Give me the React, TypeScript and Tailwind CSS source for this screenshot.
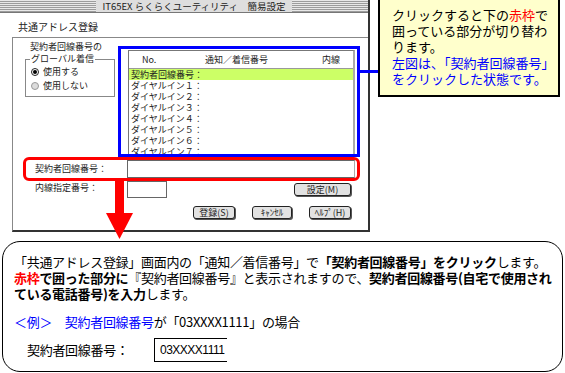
import React from 'react';

const listRows = [
  'ダイヤルイン１：',
  'ダイヤルイン２：',
  'ダイヤルイン３：',
  'ダイヤルイン４：',
  'ダイヤルイン５：',
  'ダイヤルイン６：',
  'ダイヤルイン７：',
];

const MacButton: React.FC<{ label: string; width: string }> = ({ label, width }) => (
  <div
    className={`${width} h-[13px] rounded-[3px] border border-[#222] bg-[#e2e2e2] shadow-[1px_1px_0_#555] flex items-center justify-center text-[9px] leading-[11px] whitespace-nowrap`}
  >
    {label}
  </div>
);

const Radio: React.FC<{ checked?: boolean; label: string }> = ({ checked, label }) => (
  <div className="flex items-center h-[14px] pl-[5px] gap-[4px]">
    <span
      className={`w-[8px] h-[8px] rounded-full border flex items-center justify-center ${
        checked ? 'border-[#222] bg-white' : 'border-[#999] bg-[#dcdcdc]'
      }`}
    >
      {checked && <span className="w-[4px] h-[4px] rounded-full bg-black" />}
    </span>
    <span>{label}</span>
  </div>
);

export default function App() {
  return (
    <div className="relative w-[565px] h-[373px] overflow-hidden bg-white text-black font-['Noto_Sans_CJK_JP','Noto_Sans',sans-serif]">
      <div className="flex items-start h-[240px]">
        {/* dialog window */}
        <div className="w-[370px] h-[232px] flex flex-col border-r-2 border-[#333] text-[#222]">
          <div className="h-[13px] shrink-0 border-b border-[#777] bg-[repeating-linear-gradient(to_bottom,#e8e8e8_0px,#e8e8e8_1px,#9c9c9c_1px,#9c9c9c_2px)] flex items-center justify-center pl-[20px]">
            <span className="h-[12px] bg-[#dedede] px-[6px] text-[9.5px] leading-[12px] whitespace-nowrap">
              IT65EX らくらくユーティリティ　簡易設定
            </span>
          </div>
          <div className="h-[24px] shrink-0 pl-[18px] pt-[8px] text-[10px] leading-[12px]">共通アドレス登録</div>

          <div className="ml-[12px] flex-1 flex flex-col border-l border-t border-b-2 border-[#888] border-b-[#333] text-[9px] leading-[12px]">
            <div className="flex items-start">
              <div className="w-[105px] shrink-0">
                <div className="mt-[3px] h-[12px] pl-[17px] whitespace-nowrap">契約者回線番号の</div>
                <fieldset className="ml-[12px] w-[90px] border border-[#888] pb-[3px]">
                  <legend className="ml-[4px] px-[1px] leading-[12px]">グローバル着信</legend>
                  <Radio checked label="使用する" />
                  <Radio label="使用しない" />
                </fieldset>
              </div>

              <div className="mt-[8px] w-[242px] h-[111px] shrink-0 overflow-hidden border-[3px] border-[#0000ff] pl-[7px] pr-[2px] pt-[1px]">
                <div className="h-[120px] bg-white border-l border-t border-r-2 border-[#777] border-r-[#aaa]">
                  <div className="flex items-center h-[18px] border-b border-[#999]">
                    <span className="pl-[13px] w-[76px]">No.</span>
                    <span className="w-[117px]">通知／着信番号</span>
                    <span>内線</span>
                  </div>
                  <div className="h-[11px] leading-[11px] pl-[2px] bg-[#ccff66] whitespace-nowrap">契約者回線番号：</div>
                  {listRows.map((r) => (
                    <div key={r} className="h-[11px] leading-[11px] pl-[2px] whitespace-nowrap">
                      {r}
                    </div>
                  ))}
                </div>
              </div>
            </div>

            <div className="ml-[10px] w-[337px] h-[24px] rounded-[6px] border-[3px] border-[#ff0000] flex items-center">
              <span className="w-[101px] shrink-0 pl-[9px] whitespace-nowrap">契約者回線番号：</span>
              <div className="w-[228px] h-[18px] bg-white border border-[#666] border-r-[#aaa]" />
            </div>

            <div className="flex items-start h-[17px]">
              <span className="ml-[22px] w-[92px] mt-[1px] whitespace-nowrap">内線指定番号：</span>
              <div className="w-[40px] h-[17px] border border-[#666]" />
              <div className="ml-auto mr-[17px] mt-[2px]">
                <MacButton label="設定(M)" width="w-[57px]" />
              </div>
            </div>

            <div className="flex justify-end gap-[17px] pr-[17px] mt-[8px]">
              <MacButton label="登録(S)" width="w-[42px]" />
              <MacButton label="ｷｬﾝｾﾙ" width="w-[40px]" />
              <MacButton label="ﾍﾙﾌﾟ(H)" width="w-[42px]" />
            </div>
          </div>
        </div>

        {/* callout */}
        <div className="ml-[8px] w-[182px] h-[97px] border-2 border-t-0 border-black bg-[#ffffcc] pl-[12px] pt-[7px] text-[13px] leading-[16px] whitespace-nowrap">
          <p>
            クリックすると下の<span className="text-[#ff0000]">赤枠</span>で
          </p>
          <p>囲っている部分が切り替わ</p>
          <p>ります。</p>
          <p className="text-[#0000ff]">左図は、「契約者回線番号」</p>
          <p className="text-[#0000ff]">をクリックした状態です。</p>
        </div>
      </div>

      {/* explanation */}
      <div className="mx-[2px] mt-[1px] h-[131px] rounded-[18px] border border-black pl-[11px] pt-[12px] text-[13px] leading-[16px] tracking-[-0.3px] whitespace-nowrap">
        <p>
          「共通アドレス登録」画面内の「通知／着信番号」で<b>「契約者回線番号」をクリック</b>します。
        </p>
        <p>
          <b>
            <span className="text-[#ff0000]">赤枠</span>で囲った部分に
          </b>
          『契約者回線番号』と表示されますので、<b>契約者回線番号(自宅で使用され</b>
        </p>
        <p>
          <b>ている電話番号)を入力</b>します。
        </p>
        <p className="mt-[12px]">
          <span className="text-[#0000ff]">＜例＞　契約者回線番号</span>が「03XXXX1111」の場合
        </p>
        <div className="flex items-center h-[24px] mt-[8px]">
          <span className="ml-[13px] w-[127px]">契約者回線番号：</span>
          <div className="w-[73px] h-[24px] border-l border-t border-b border-black pl-[5px] flex items-center font-['Liberation_Sans',sans-serif] text-[12px] tracking-[-0.5px]">
            03XXXX1111
          </div>
        </div>
      </div>

      {/* annotations */}
      <div className="absolute left-[360px] top-[70px] w-[18px] h-[3px] bg-[#0000ff]" />
      <svg className="absolute left-[104px] top-[181px]" width="31" height="59" viewBox="0 0 31 59">
        <rect x="11" y="0" width="9" height="34" fill="#ff0000" />
        <polygon points="2,32 29,32 15.5,58" fill="#ff0000" />
      </svg>
    </div>
  );
}
